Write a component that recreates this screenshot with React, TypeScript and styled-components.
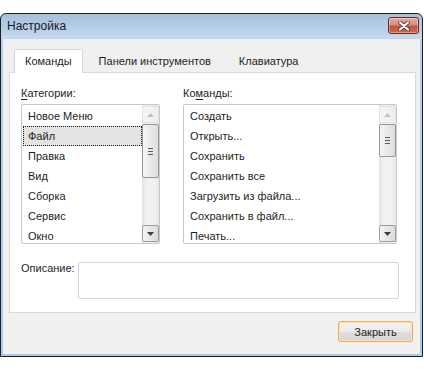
import styled, { createGlobalStyle } from 'styled-components';

const GlobalStyle = createGlobalStyle`
  body {
    margin: 0;
    background: #fff;
    font-family: "Liberation Sans", Arial, sans-serif;
    font-size: 11px;
    color: #1e1e1e;
  }
`;

const categories = ['Новое Меню', 'Файл', 'Правка', 'Вид', 'Сборка', 'Сервис', 'Окно'];
const commands = [
  'Создать',
  'Открыть...',
  'Сохранить',
  'Сохранить все',
  'Загрузить из файла...',
  'Сохранить в файл...',
  'Печать...',
];

function CloseGlyph() {
  return (
    <svg width="12" height="10" viewBox="0 0 12 10">
      <path d="M2 1.5 L10 8.5 M10 1.5 L2 8.5" stroke="#5b3a36" strokeWidth="4" strokeLinecap="round" />
      <path d="M2 1.5 L10 8.5 M10 1.5 L2 8.5" stroke="#fff" strokeWidth="2.2" strokeLinecap="round" />
    </svg>
  );
}

function Arrow({ down, disabled }: { down?: boolean; disabled?: boolean }) {
  return (
    <svg width="7" height="4" viewBox="0 0 7 4">
      <path d={down ? 'M0 0 H7 L3.5 4 Z' : 'M0 4 H7 L3.5 0 Z'} fill={disabled ? '#c2c2c2' : '#3c3c3c'} />
    </svg>
  );
}

function ListBox({ items, selected, thumb }: { items: string[]; selected?: number; thumb: number }) {
  return (
    <List>
      <Rows>
        {items.map((it, i) => (
          <Row key={it} $selected={i === selected}>{it}</Row>
        ))}
      </Rows>
      <ScrollBar>
        <ScrollButton $disabled>
          <Arrow disabled />
        </ScrollButton>
        <Thumb style={{ height: thumb }}>
          <Grip />
          <Grip />
          <Grip />
        </Thumb>
        <Track />
        <ScrollButton>
          <Arrow down />
        </ScrollButton>
      </ScrollBar>
    </List>
  );
}

export default function App() {
  return (
    <>
      <GlobalStyle />
      <Window>
        <TitleBar>
          <Title>Настройка</Title>
          <CloseButton>
            <CloseGlyph />
          </CloseButton>
        </TitleBar>
        <Body>
          <Tabs>
            <Tab $active>Команды</Tab>
            <Tab>Панели инструментов</Tab>
            <Tab>Клавиатура</Tab>
          </Tabs>
          <Panel>
            <Columns>
              <Column $width={139}>
                <Label><u>К</u>атегории:</Label>
                <ListBox items={categories} selected={1} thumb={54} />
              </Column>
              <Column $width={214}>
                <Label>Ко<u>м</u>анды:</Label>
                <ListBox items={commands} thumb={33} />
              </Column>
            </Columns>
            <DescRow>
              <DescLabel>Описание:</DescLabel>
              <TextBox />
            </DescRow>
          </Panel>
          <Footer>
            <Button>Закрыть</Button>
          </Footer>
        </Body>
      </Window>
    </>
  );
}

const Window = styled.div`
  margin-top: 13px;
  width: 423px;
  height: 344px;
  box-sizing: border-box;
  border: 1px solid #1f1f1f;
  border-radius: 6px 6px 0 0;
  background: linear-gradient(#a6c0de, #c4d8ee 24px, #b4d0ee 25px, #a9cbec);
  display: flex;
  flex-direction: column;
`;

const TitleBar = styled.div`
  height: 25px;
  flex: none;
  display: flex;
  align-items: center;
  justify-content: space-between;
  padding: 0 3px 0 6px;
`;

const Title = styled.span`
  font-size: 12px;
  color: #1a1a1a;
  margin-top: -1px;
`;

const CloseButton = styled.div`
  width: 31px;
  height: 17px;
  box-sizing: border-box;
  margin-top: -2px;
  border: 1px solid #6a2a22;
  border-radius: 3px;
  background: linear-gradient(#e6ad9f, #d88e7c 45%, #c2513d 55%, #cf6a52);
  box-shadow: inset 0 0 0 1px rgba(255, 255, 255, 0.35);
  display: flex;
  align-items: center;
  justify-content: center;
`;

const Body = styled.div`
  flex: 1;
  margin: 0 2px 2px;
  background: #f0f0f0;
  padding: 10px 4px 0 6px;
  display: flex;
  flex-direction: column;
`;

const Tabs = styled.div`
  display: flex;
  align-items: flex-end;
  height: 23px;
  padding-left: 5px;
  position: relative;
  z-index: 1;
`;

const Tab = styled.div<{ $active?: boolean }>`
  height: ${p => (p.$active ? '24px' : '23px')};
  box-sizing: border-box;
  display: flex;
  align-items: center;
  white-space: nowrap;
  padding: ${p => (p.$active ? '0 10px 1px' : '0 13px 1px')};
  margin-right: ${p => (p.$active ? '2px' : '0')};
  margin-bottom: ${p => (p.$active ? '-1px' : '0')};
  background: ${p => (p.$active ? '#fff' : 'transparent')};
  border: 1px solid ${p => (p.$active ? '#d6d6d6' : 'transparent')};
  border-bottom: none;
  border-radius: 2px 2px 0 0;
  color: #1e1e1e;
`;

const Panel = styled.div`
  width: 407px;
  box-sizing: border-box;
  background: #fff;
  border: 1px solid #d9d9d9;
  padding: 12px 0 13px 11px;
`;

const Columns = styled.div`
  display: flex;
  gap: 23px;
`;

const Column = styled.div<{ $width: number }>`
  width: ${p => p.$width}px;
  display: flex;
  flex-direction: column;
`;

const Label = styled.div`
  line-height: 16px;
  margin-bottom: 3px;
  u {
    text-decoration-thickness: 1px;
    text-underline-offset: 2px;
  }
`;

const List = styled.div`
  height: 140px;
  box-sizing: border-box;
  border: 1px solid #c8c8c8;
  border-radius: 2px;
  display: flex;
  overflow: hidden;
`;

const Rows = styled.div`
  flex: 1;
  min-width: 0;
  padding: 1px 0 0 1px;
  overflow: hidden;
`;

const Row = styled.div<{ $selected?: boolean }>`
  height: 20px;
  box-sizing: border-box;
  line-height: 18px;
  padding-left: 4px;
  white-space: nowrap;
  background: ${p => (p.$selected ? '#e3e3e3' : 'transparent')};
  border: 1px dotted ${p => (p.$selected ? '#1a1a1a' : 'transparent')};
`;

const ScrollBar = styled.div`
  width: 17px;
  flex: none;
  padding: 1px 0;
  display: flex;
  flex-direction: column;
  background: linear-gradient(to right, #e2e2e2, #f1f1f1 25%, #f1f1f1 75%, #e6e6e6);
`;

const ScrollButton = styled.div<{ $disabled?: boolean }>`
  height: 17px;
  flex: none;
  box-sizing: border-box;
  border: 1px solid ${p => (p.$disabled ? '#e2e2e2' : '#9e9e9e')};
  border-radius: 2px;
  background: ${p =>
    p.$disabled
      ? 'linear-gradient(to right, #f6f6f6, #eeeeee)'
      : 'linear-gradient(to right, #f4f4f4, #e6e6e6 50%, #dcdcdc)'};
  display: flex;
  align-items: center;
  justify-content: center;
`;

const Thumb = styled.div`
  flex: none;
  margin-top: 1px;
  box-sizing: border-box;
  border: 1px solid #979797;
  border-radius: 2px;
  background: linear-gradient(to right, #f5f5f5, #e9e9e9 50%, #dedede);
  display: flex;
  flex-direction: column;
  align-items: center;
  justify-content: center;
  gap: 2px;
`;

const Grip = styled.div`
  width: 5px;
  height: 1px;
  background: #5a5a5a;
`;

const Track = styled.div`
  flex: 1;
`;

const DescRow = styled.div`
  display: flex;
  margin-top: 18px;
`;

const DescLabel = styled.div`
  width: 57px;
  white-space: nowrap;
  line-height: 16px;
  margin-top: -2px;
`;

const TextBox = styled.div`
  width: 321px;
  height: 37px;
  box-sizing: border-box;
  border: 1px solid #d4d4d4;
  border-radius: 2px;
  background: #fff;
`;

const Footer = styled.div`
  display: flex;
  justify-content: flex-end;
  padding: 8px 3px 0 0;
`;

const Button = styled.div`
  width: 75px;
  height: 21px;
  box-sizing: border-box;
  border: 1px solid #f0a94f;
  border-radius: 3px;
  background: linear-gradient(#f3f3f3, #ebebeb 50%, #dddddd 51%, #d6d6d6);
  box-shadow: inset 0 0 0 1px #fbe2bd;
  display: flex;
  align-items: center;
  justify-content: center;
  color: #1e1e1e;
`;
